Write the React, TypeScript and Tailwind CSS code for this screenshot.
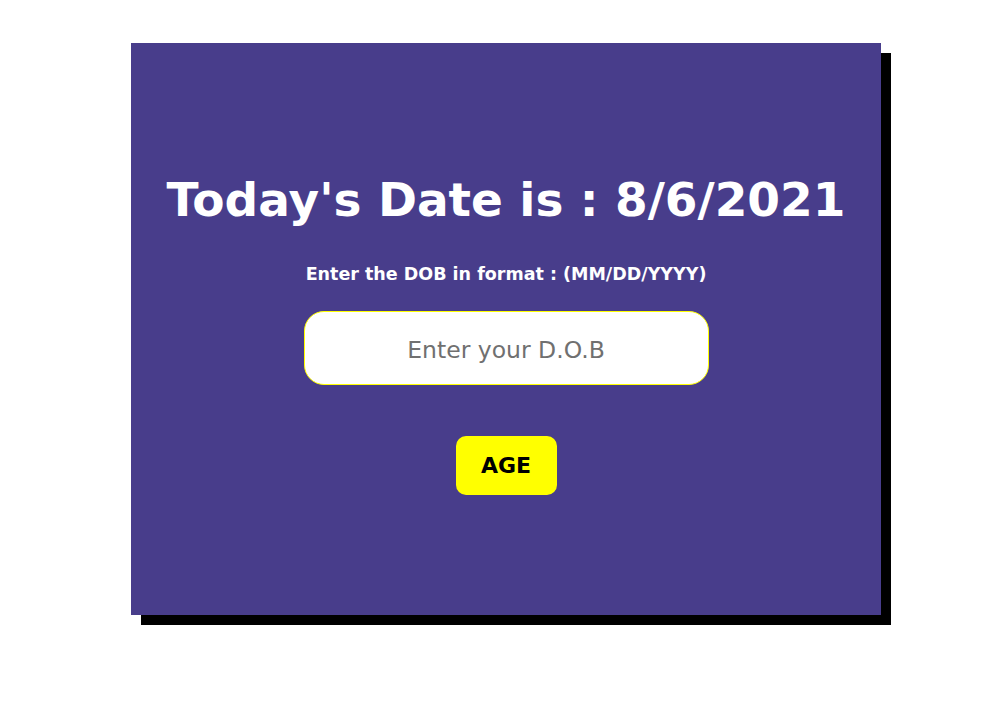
export default function App() {
  return (
    <div
      className="min-h-[701px] bg-white pl-[131px] pt-[43px]"
      style={{ fontFamily: '"Comic Sans MS", "DejaVu Sans", sans-serif' }}
    >
      <div className="flex h-[572px] w-[750px] flex-col items-center bg-[#483d8b] pt-[125px] shadow-[10px_10px_0_0_#000]">
        <h1 className="text-[47px] font-bold leading-[64px] text-white">
          Today's Date is : 8/6/2021
        </h1>
        <p className="mt-[29px] text-[17.5px] font-bold text-white">
          Enter the DOB in format : (MM/DD/YYYY)
        </p>
        <input
          type="text"
          placeholder="Enter your D.O.B"
          className="mt-[24px] h-[74px] w-[405px] rounded-[20px] border border-[#ffff00] bg-white pt-[3px] text-center text-[23.5px] text-gray-700 outline-none placeholder:text-[#707070]"
        />
        <button className="mt-[51px] h-[59px] w-[101px] rounded-[10px] bg-[#ffff00] text-[22px] font-bold text-black">
          AGE
        </button>
      </div>
    </div>
  );
}
